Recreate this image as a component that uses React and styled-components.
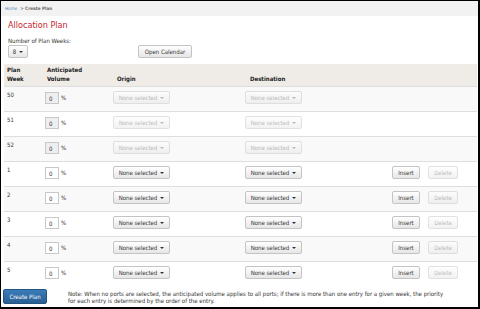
import React from 'react';
import styled, { createGlobalStyle, css } from 'styled-components';

const Global = createGlobalStyle`
  html, body { margin: 0; padding: 0; background: #fff; }
  body {
    font-family: "DejaVu Sans Condensed", "DejaVu Sans", sans-serif;
    font-size: 6px;
    color: #333;
  }
  * { box-sizing: border-box; }
`;

const Frame = styled.div`
  width: 480px;
  height: 309px;
  border-style: solid;
  border-color: #000;
  border-width: 1px 2px 2px 1px;
  overflow: hidden;
  display: flex;
  flex-direction: column;
  background: #fff;
`;

const Crumbs = styled.div`
  height: 15px;
  flex: none;
  background: #f2f2f2;
  display: flex;
  align-items: center;
  gap: 3px;
  padding-left: 4px;
  font-size: 4.6px;
`;

const CrumbLink = styled.a`
  color: #4f86c0;
  text-decoration: none;
`;

const CrumbCurrent = styled.span`
  color: #666;
  font-weight: bold;
`;

const Title = styled.h1`
  margin: 3px 0 0;
  padding-left: 7px;
  font-size: 9px;
  line-height: 12px;
  font-weight: normal;
  color: #c8242b;
`;

const FieldLabel = styled.div`
  margin-top: 6px;
  padding-left: 7px;
  line-height: 8px;
`;

const Toolbar = styled.div`
  display: flex;
  align-items: center;
  padding-left: 7px;
  gap: 110px;
`;

const Btn = styled.button`
  font: inherit;
  font-size: 6px;
  height: 13px;
  width: ${p => p.$w}px;
  padding: 0;
  border: 1px solid #c4c4c4;
  border-radius: 2px;
  color: #333;
  background-image: linear-gradient(#ffffff, #e6e6e6);
  display: inline-flex;
  align-items: center;
  justify-content: center;
  gap: 3px;
  line-height: 1;
  white-space: nowrap;
  ${p => p.disabled && css`
    opacity: 0.5;
    color: #777;
  `}
`;

const Caret = styled.span`
  display: inline-block;
  width: 0;
  height: 0;
  border-top: 2px solid currentColor;
  border-left: 2px solid transparent;
  border-right: 2px solid transparent;
`;

const Table = styled.div`
  margin: 6px 1px 0 3px;
  display: flex;
  flex-direction: column;
`;

const cols = '39px 67px 132px 146px 36px 53px';

const HeadRow = styled.div`
  display: grid;
  grid-template-columns: ${cols};
  height: 22px;
  align-items: end;
  background: #efebe6;
  padding-bottom: 3px;
`;

const Th = styled.div`
  font-weight: bold;
  line-height: 8.3px;
  padding-left: ${p => p.$pl}px;
  color: #222;
`;

const Row = styled.div`
  display: grid;
  grid-template-columns: ${cols};
  height: 25px;
  align-items: start;
  border-top: 1px solid #dedede;
  background: ${p => (p.$striped ? '#f9f9f9' : '#fff')};
`;

const Td = styled.div`
  padding-top: ${p => p.$pt ?? 3}px;
  padding-left: ${p => p.$pl}px;
  line-height: 8px;
  display: flex;
  align-items: center;
  color: #333;
`;

const Volume = styled.input`
  width: 14px;
  height: 12px;
  border: 1px solid #c8c8c8;
  font: inherit;
  font-size: 6px;
  padding: 0 0 0 3px;
  color: #333;
  background: ${p => (p.disabled ? '#eee' : '#fff')};
`;

const Pct = styled.span`
  margin-left: 2px;
`;

const Footer = styled.div`
  display: flex;
  align-items: flex-start;
  padding: 3px 0 0 2px;
`;

const Primary = styled.button`
  font: inherit;
  font-size: 6px;
  width: 44px;
  height: 15px;
  flex: none;
  padding: 0;
  border: 1px solid #245580;
  border-radius: 2px;
  color: #fff;
  background-image: linear-gradient(#3a7cba, #2a5f92);
`;

const Note = styled.p`
  margin: 0.5px 0 0 21px;
  width: 376px;
  flex: none;
  line-height: 7.5px;
  font-size: 6px;
  color: #333;
`;

const rows = [
  { week: '50', locked: true },
  { week: '51', locked: true },
  { week: '52', locked: true },
  { week: '1' },
  { week: '2' },
  { week: '3' },
  { week: '4' },
  { week: '5' },
];

export default function App() {
  return (
    <>
      <Global />
      <Frame>
        <Crumbs>
          <CrumbLink href="#">Home</CrumbLink>
          <CrumbCurrent>&gt; Create Plan</CrumbCurrent>
        </Crumbs>
        <Title>Allocation Plan</Title>
        <FieldLabel>Number of Plan Weeks:</FieldLabel>
        <Toolbar>
          <Btn $w={20}>8 <Caret /></Btn>
          <Btn $w={54}>Open Calendar</Btn>
        </Toolbar>
        <Table>
          <HeadRow>
            <Th $pl={3}>Plan<br />Week</Th>
            <Th $pl={4}>Anticipated<br />Volume</Th>
            <Th $pl={7}>Origin</Th>
            <Th $pl={8}>Destination</Th>
            <Th $pl={0} />
            <Th $pl={0} />
          </HeadRow>
          {rows.map((r, i) => (
            <Row key={r.week} $striped={i % 2 === 0}>
              <Td $pl={3} $pt={4}>{r.week}</Td>
              <Td $pl={2} $pt={5}>
                <Volume defaultValue="0" disabled={r.locked} />
                <Pct>%</Pct>
              </Td>
              <Td $pl={3} $pt={4}>
                <Btn $w={57} disabled={r.locked}>None selected <Caret /></Btn>
              </Td>
              <Td $pl={3} $pt={4}>
                <Btn $w={57} disabled={r.locked}>None selected <Caret /></Btn>
              </Td>
              <Td $pl={4} $pt={4}>
                {!r.locked && <Btn $w={28}>Insert</Btn>}
              </Td>
              <Td $pl={4} $pt={4}>
                {!r.locked && <Btn $w={30} disabled>Delete</Btn>}
              </Td>
            </Row>
          ))}
        </Table>
        <Footer>
          <Primary>Create Plan</Primary>
          <Note>
            Note: When no ports are selected, the anticipated volume applies to all ports; if there is more than one entry for a given week, the priority for each entry is determined by the order of the entry.
          </Note>
        </Footer>
      </Frame>
    </>
  );
}
